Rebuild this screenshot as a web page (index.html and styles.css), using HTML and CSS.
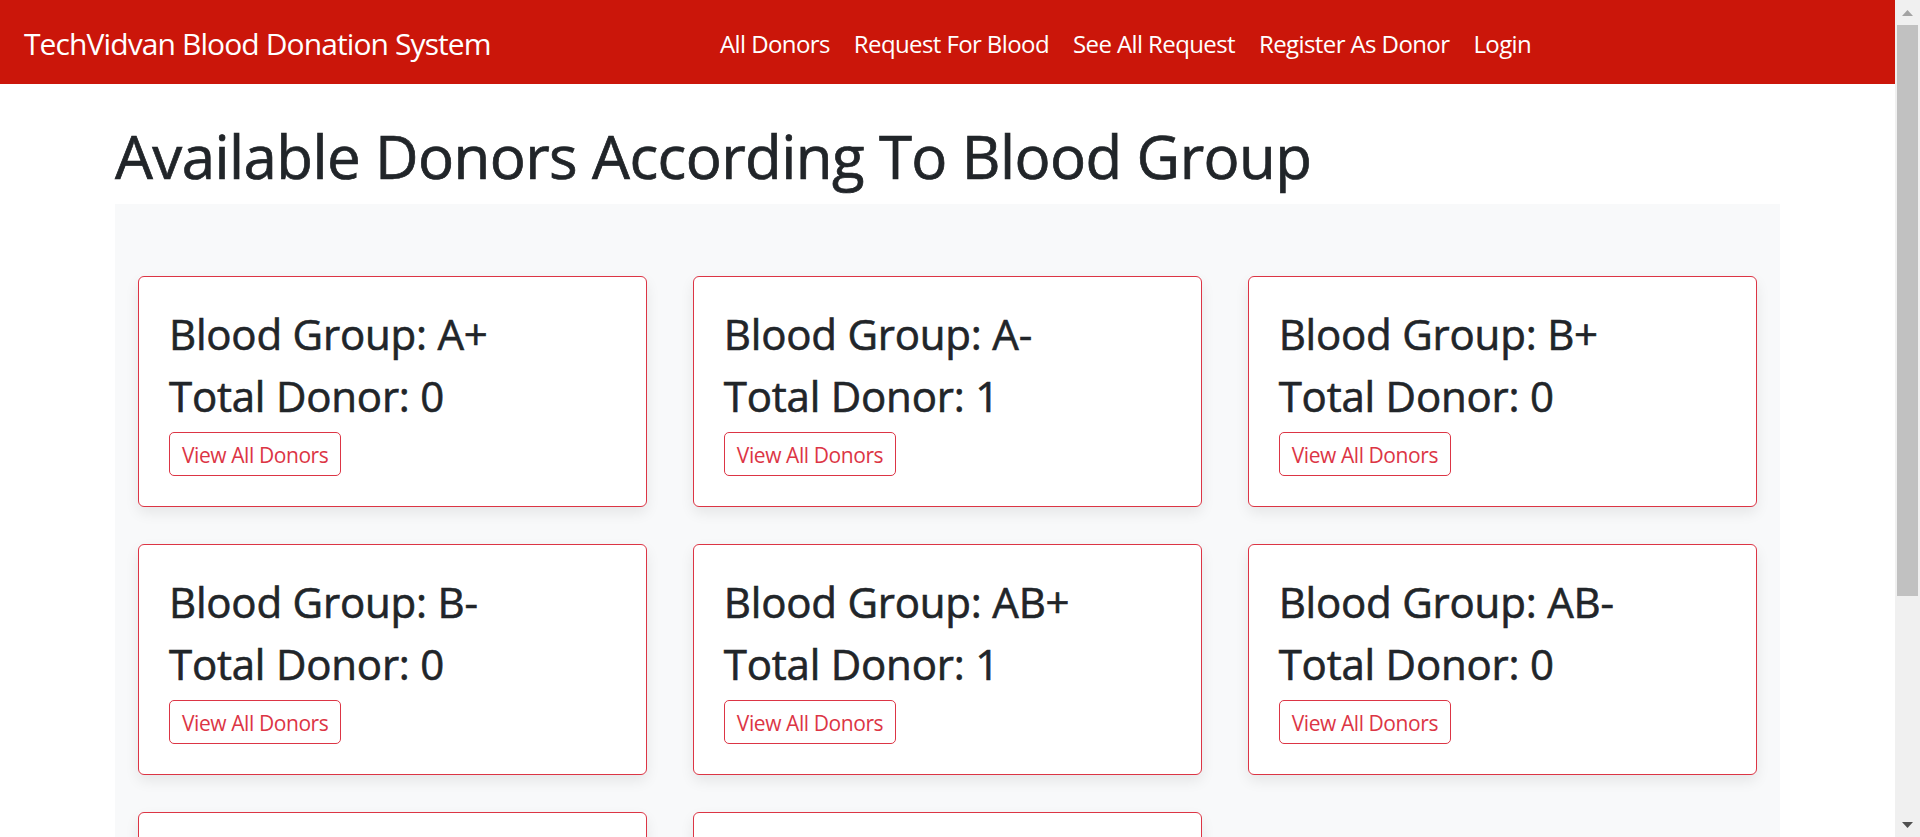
FILE: index.html
```html
<!DOCTYPE html>
<html lang="en">
<head>
<meta charset="utf-8">
<title>TechVidvan Blood Donation System</title>
<link rel="stylesheet" href="styles.css">
</head>
<body>
<div class="viewport">
  <div class="page">
    <nav class="navbar">
      <a class="brand" href="#">TechVidvan Blood Donation System</a>
      <ul class="nav">
        <li><a class="nav-link" href="#">All Donors</a></li>
        <li><a class="nav-link" href="#">Request For Blood</a></li>
        <li><a class="nav-link" href="#">See All Request</a></li>
        <li><a class="nav-link" href="#">Register As Donor</a></li>
        <li><a class="nav-link" href="#">Login</a></li>
      </ul>
    </nav>
    <main class="container">
      <h1 class="title">Available Donors According To Blood Group</h1>
      <section class="panel">
        <div class="grid">
          <div class="card"><h3>Blood Group: A+</h3><h3>Total Donor: 0</h3><a class="btn" href="#">View All Donors</a></div>
          <div class="card"><h3>Blood Group: A-</h3><h3>Total Donor: 1</h3><a class="btn" href="#">View All Donors</a></div>
          <div class="card"><h3>Blood Group: B+</h3><h3>Total Donor: 0</h3><a class="btn" href="#">View All Donors</a></div>
          <div class="card"><h3>Blood Group: B-</h3><h3>Total Donor: 0</h3><a class="btn" href="#">View All Donors</a></div>
          <div class="card"><h3>Blood Group: AB+</h3><h3>Total Donor: 1</h3><a class="btn" href="#">View All Donors</a></div>
          <div class="card"><h3>Blood Group: AB-</h3><h3>Total Donor: 0</h3><a class="btn" href="#">View All Donors</a></div>
          <div class="card"><h3>Blood Group: O+</h3><h3>Total Donor: 0</h3><a class="btn" href="#">View All Donors</a></div>
          <div class="card"><h3>Blood Group: O-</h3><h3>Total Donor: 0</h3><a class="btn" href="#">View All Donors</a></div>
        </div>
      </section>
    </main>
  </div>
  <div class="scrollbar">
    <div class="sb-btn"><svg width="11" height="6" viewBox="0 0 11 6"><path d="M0 6 L5.5 0 L11 6 Z" fill="#a3a3a3"/></svg></div>
    <div class="sb-thumb"></div>
    <div class="sb-track"></div>
    <div class="sb-btn"><svg width="11" height="6" viewBox="0 0 11 6"><path d="M0 0 L11 0 L5.5 6 Z" fill="#505050"/></svg></div>
  </div>
</div>
</body>
</html>
```

FILE: styles.css
```css
html, body {
  margin: 0;
  padding: 0;
  overflow: hidden;
}

body {
  font-family: "Open Sans", "Noto Sans", sans-serif;
  color: #212529;
  background: #fff;
}

.viewport {
  display: flex;
  height: 837px;
  overflow: hidden;
}

.page {
  flex: 1;
  min-width: 0;
  overflow: hidden;
}

/* Navbar */
.navbar {
  display: flex;
  align-items: center;
  height: 84px;
  box-sizing: border-box;
  padding: 12px 24px;
  background: #cb160a;
}

.brand {
  flex: 0 0 684px;
  padding-top: 3px;
  font-size: 30px;
  line-height: 45px;
  color: #fff;
  text-decoration: none;
  letter-spacing: -0.03em;
}

.nav {
  display: flex;
  list-style: none;
  margin: 0;
  padding: 3px 0 0;
}

.nav-link {
  display: block;
  padding: 0 12px;
  font-size: 24px;
  line-height: 36px;
  color: #fff;
  text-decoration: none;
  letter-spacing: -0.025em;
}

/* Main */
.container {
  width: 1665px;
  margin: 0 auto;
}

.title {
  margin: 34px 0 12px;
  padding-top: 2px;
  font-size: 60px;
  line-height: 72px;
  font-weight: 400;
  letter-spacing: -0.01em;
  -webkit-text-stroke: 0.7px #212529;
}

.panel {
  background: #f8f9fa;
  padding: 72px 23px 40px;
}

.grid {
  display: grid;
  grid-template-columns: repeat(3, 1fr);
  column-gap: 45.5px;
  row-gap: 37px;
}

.card {
  background: #fff;
  border: 1px solid #dc3545;
  border-radius: 6px;
  padding: 30px;
  box-shadow: 0 6px 14px rgba(0, 0, 0, 0.08);
}

.card h3 {
  margin: 0 0 10px;
  padding-top: 2px;
  font-size: 42px;
  line-height: 50.4px;
  font-weight: 400;
  letter-spacing: -0.005em;
  -webkit-text-stroke: 0.6px #212529;
}

.btn {
  display: inline-block;
  padding: 7px 12px 5px;
  font-size: 21px;
  line-height: 30px;
  color: #dc3545;
  border: 1px solid #dc3545;
  border-radius: 5px;
  text-decoration: none;
  letter-spacing: -0.02em;
}

/* Scrollbar */
.scrollbar {
  flex: 0 0 25px;
  display: flex;
  flex-direction: column;
  background: #f0f0f0;
}

.sb-btn {
  flex: 0 0 25px;
  display: flex;
  align-items: center;
  justify-content: center;
}

.sb-thumb {
  flex: 0 0 571px;
  margin: 0 2px;
  background: #c1c1c1;
}

.sb-track {
  flex: 1;
}
```
